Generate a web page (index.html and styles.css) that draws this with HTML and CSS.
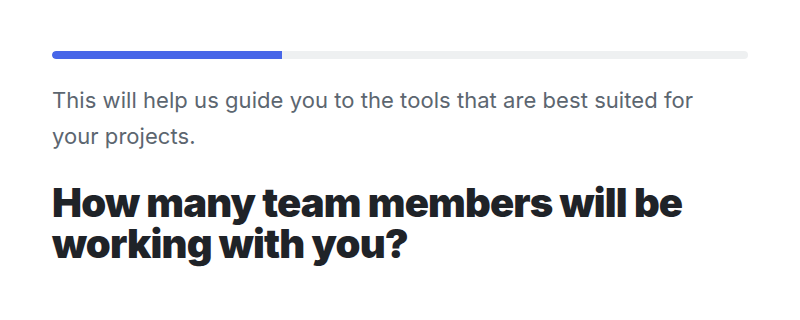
FILE: index.html
```html
<!DOCTYPE html>
<html lang="en">
<head>
  <meta charset="UTF-8">
  <meta name="viewport" content="width=device-width, initial-scale=1.0">
  <title>Team size</title>
  <link rel="stylesheet" href="styles.css">
</head>
<body>
  <div class="step">
    <div class="progress">
      <div class="progress-fill" style="width: 33%"></div>
    </div>
    <p class="intro">This will help us guide you to the tools that are best suited for your projects.</p>
    <h1 class="question">How many team members will be working with you?</h1>
  </div>
</body>
</html>
```

FILE: styles.css
```css
body {
  font-family: Inter, "Noto Sans", sans-serif;
  background-color: #fff;
  margin: 0;
  padding: 0;
  min-height: 100vh;
}

.step {
  padding: 51px 52px 40px;
}

.progress {
  height: 8px;
  background-color: #eef0f1;
  border-radius: 4px;
  overflow: hidden;
}

.progress-fill {
  height: 100%;
  background-color: #4766e8;
  border-radius: 4px 0 0 4px;
}

.intro {
  max-width: 660px;
  margin: 23px 0 0;
  color: #5c6670;
  font-size: 22px;
  line-height: 36px;
  letter-spacing: 0.05px;
}

.question {
  margin: 28px 0 0;
  color: #1f2328;
  font-size: 40px;
  font-weight: 900;
  line-height: 41px;
  letter-spacing: -0.85px;
}
```
